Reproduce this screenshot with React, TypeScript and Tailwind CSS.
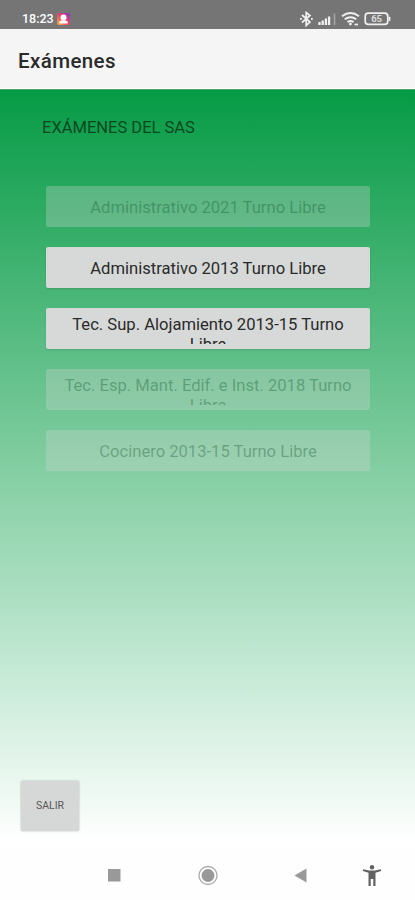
import React from 'react';
import clsx from 'clsx';

interface Exam {
  id: number;
  title: string;
  enabled: boolean;
  wraps?: boolean;
}

const EXAMS: Exam[] = [
  { id: 1, title: 'Administrativo 2021 Turno Libre', enabled: false },
  { id: 2, title: 'Administrativo 2013 Turno Libre', enabled: true },
  { id: 3, title: 'Tec. Sup. Alojamiento 2013-15 Turno Libre', enabled: true, wraps: true },
  { id: 4, title: 'Tec. Esp. Mant. Edif. e Inst. 2018 Turno Libre', enabled: false, wraps: true },
  { id: 5, title: 'Cocinero 2013-15 Turno Libre', enabled: false },
];

const ProfileIcon = () => (
  <svg className="ml-[3px] h-3 w-[13px]" viewBox="0 0 13 12">
    <defs>
      <linearGradient id="profile" x1="1" y1="0" x2="0" y2="1">
        <stop offset="0" stopColor="#8436c8" />
        <stop offset="0.5" stopColor="#e84468" />
        <stop offset="1" stopColor="#f9b13c" />
      </linearGradient>
    </defs>
    <rect width="13" height="12" rx="2" fill="url(#profile)" />
    <circle cx="6.5" cy="4.6" r="3" fill="#fff" />
    <path d="M2.3 10.5V8.6L5 7.2h3l2.7 1.4v1.9z" fill="#fff" />
  </svg>
);

const StatusBar = () => (
  <div className="flex h-[29px] items-center bg-[#757575] pt-2 pr-[24px] pl-[22px] text-white">
    <span className="pt-[2px] text-[12.5px] leading-none font-medium">18:23</span>
    <ProfileIcon />
    <svg className="ml-auto h-4 w-[92px]" viewBox="299 11 92 16" fill="none" stroke="#f0f0f0">
      {/* bluetooth */}
      <path d="M302 15l8 7-3.8 3.5V12.5l3.8 3-8 7" strokeWidth="1.7" />
      <path d="M300 18.8h1.8M311 18.8h1.8" strokeWidth="1.8" />
      {/* signal */}
      <path d="M319.5 25v-3M322.7 25v-4.5M325.9 25v-6.5M329.1 25v-8.5" strokeWidth="2.3" />
      <path d="M334.5 25V13.5" stroke="#a5a5a5" strokeWidth="1.6" />
      {/* wifi */}
      <path d="M342 16.2q8.5-6.2 17 0M344.7 19.2q5.8-4.1 11.6 0M347.4 22q3.1-2 6.2 0" strokeWidth="2" />
      <circle cx="350.4" cy="24" r="1.4" fill="#f0f0f0" stroke="none" />
      <path d="M354.5 24.5h3.5" strokeWidth="1.7" />
      {/* battery */}
      <rect x="365.2" y="13.2" width="22.6" height="11.2" rx="3.2" strokeWidth="1.7" />
      <path d="M389.5 16.8v4" strokeWidth="1.8" />
      <text x="376.6" y="22.2" textAnchor="middle" fontSize="9.5" fontWeight="700" fill="#dedede" stroke="none">
        65
      </text>
    </svg>
  </div>
);

const ExamButton: React.FC<{ exam: Exam }> = ({ exam }) => (
  <button
    disabled={!exam.enabled}
    className={clsx(
      'block h-[41px] w-full rounded-[2px] px-3 text-center text-[16.6px] leading-5',
      exam.enabled ? 'bg-[#d7d9d8] text-[#2a2a2a] shadow-[0_1px_2px_#0002]' : 'bg-[#d6d7d7]/30 text-[#064f26]/35',
    )}
  >
    {/* second line is cut off by the fixed height */}
    <span className={clsx('block overflow-hidden', exam.wraps ? 'mt-0.5 h-[29px]' : 'mt-0.5 h-5')}>
      {exam.title}
    </span>
  </button>
);

const NavBar = () => (
  <div className="h-[50px] bg-[#fefefe]">
    <svg className="h-[50px] w-full" viewBox="0 850 415 50">
      <rect x="108" y="869" width="12.5" height="12.5" fill="#999" />
      <circle cx="208" cy="875.5" r="9" fill="none" stroke="#a9a9a9" strokeWidth="1.3" />
      <circle cx="208" cy="875.5" r="6.4" fill="#999" />
      <path d="M294.5 875.5l12-7v14z" fill="#999" />
      <g fill="#626262">
        <circle cx="372" cy="867.2" r="2.2" />
        <path d="M363.2 869.3l5.8 1.3h6l5.8-1.3.3 1.6-5.6 1.8V886h-2.2v-7h-2.6v7h-2.2v-13.3l-5.6-1.8z" />
      </g>
    </svg>
  </div>
);

export default function App() {
  return (
    <div className="flex h-[900px] w-[415px] flex-col overflow-hidden font-['Roboto',sans-serif]">
      <StatusBar />
      <header className="flex h-[60px] items-center border-b border-white bg-[#f5f5f5] pt-[5px] pl-[18px]">
        <h1 className="text-[20.5px] leading-none font-medium tracking-[0.4px] text-[#2a2a2a]">Exámenes</h1>
      </header>

      <main className="flex flex-1 flex-col border-t border-[#4ca56c] bg-[linear-gradient(to_bottom,#069b45_0%,#38af6b_20%,#86cfa4_51%,#b7e4cb_71%,#ffffff_99%)] pt-[28px]">
        <h2 className="ml-[42px] text-[16.5px] leading-5 text-[#06491f]">EXÁMENES DEL SAS</h2>
        <div className="mt-12 mr-[45px] ml-[46px] flex flex-col gap-5">
          {EXAMS.map(exam => (
            <ExamButton key={exam.id} exam={exam} />
          ))}
        </div>
        <button className="mt-auto mb-[19px] ml-[21px] h-[50px] w-[58px] rounded-[2px] bg-[#d6d8d7] text-[10.5px] text-[#555] shadow-[0_0_2px_#0005]">
          SALIR
        </button>
      </main>

      <NavBar />
    </div>
  );
}
